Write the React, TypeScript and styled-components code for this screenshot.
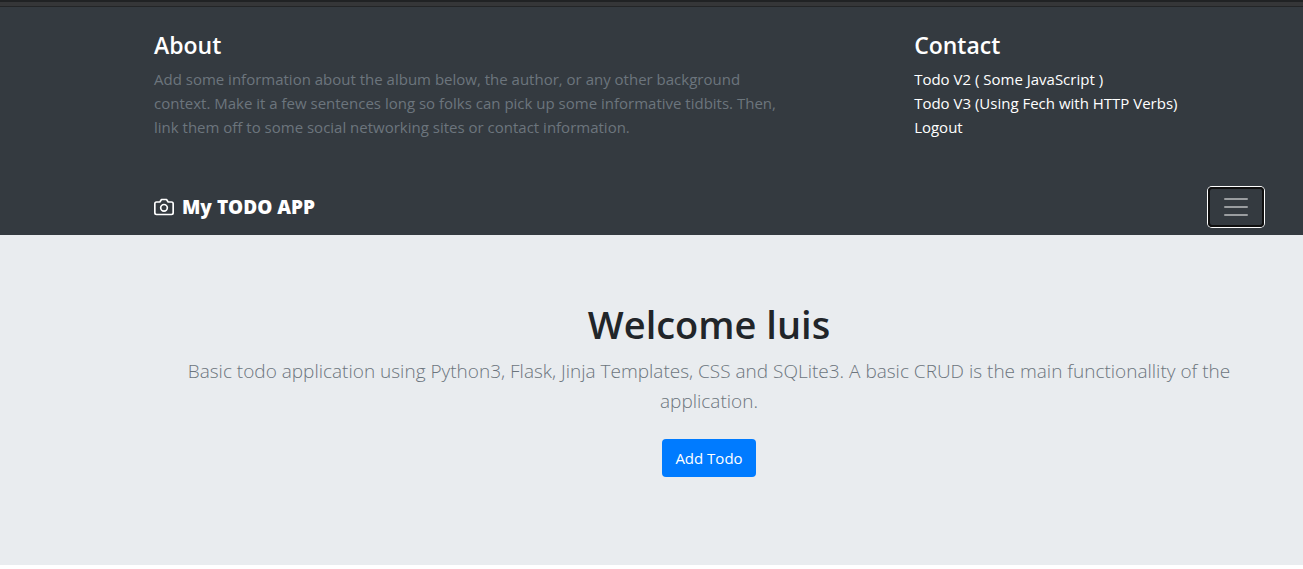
import React from "react";
import styled, { createGlobalStyle } from "styled-components";

const GlobalStyle = createGlobalStyle`
  *, *::before, *::after { box-sizing: border-box; }
  body {
    margin: 0;
    background: #fff;
    color: #212529;
    font-family: "Segoe UI", "Open Sans", "Noto Sans", sans-serif;
    font-size: 15px;
    line-height: 24px;
  }
`;

const TopEdge = styled.div`
  height: 7px;
  background: #353638;
  border-top: 2px solid #202224;
  border-bottom: 1px solid #232527;
`;

const Header = styled.header`
  background: #343a40;
  color: #fff;
`;

const Container = styled.div`
  padding: 0 39px 0 154px;
`;

const InfoRow = styled(Container)`
  display: grid;
  grid-template-columns: 20fr 11fr;
  column-gap: 124px;
  padding-top: 24px;
  padding-bottom: 40px;
`;

const InfoTitle = styled.h4`
  margin: 0 0 8px;
  font-size: 23px;
  font-weight: 600;
  line-height: 28px;
`;

const Muted = styled.p`
  margin: 0;
  color: #6c757d;
`;

const LinkList = styled.ul`
  margin: 0;
  padding: 0;
  list-style: none;
`;

const NavLink = styled.a`
  color: #fff;
  text-decoration: none;
`;

const NavBar = styled(Container)`
  display: flex;
  align-items: center;
  justify-content: space-between;
  padding-top: 8px;
  padding-bottom: 8px;
`;

const Brand = styled.a`
  display: flex;
  align-items: center;
  gap: 8px;
  color: #fff;
  font-size: 19px;
  font-weight: 700;
  line-height: 30px;
  text-decoration: none;
`;

const Toggler = styled.button`
  display: flex;
  align-items: center;
  justify-content: center;
  width: 56px;
  height: 40px;
  padding: 0;
  background: transparent;
  border: 2px solid #101010;
  border-radius: 4px;
  box-shadow: 0 0 0 1px #fff;
`;

const Hero = styled.section`
  background: #e9ecef;
  padding: 65px 0 88px;
`;

const HeroContent = styled(Container)`
  text-align: center;
`;

const HeroTitle = styled.h1`
  margin: 0 0 8px;
  font-size: 38px;
  font-weight: 600;
  line-height: 48px;
`;

const Lead = styled.p`
  margin: 0 0 23px;
  color: #6c757d;
  font-size: 19px;
  font-weight: 300;
  line-height: 30px;
`;

const PrimaryButton = styled.button`
  height: 38px;
  padding: 0 13px;
  border: 0;
  border-radius: 4px;
  background: #007bff;
  color: #fff;
  font: inherit;
  vertical-align: top;
`;

const links = [
  "Todo V2 ( Some JavaScript )",
  "Todo V3 (Using Fech with HTTP Verbs)",
  "Logout",
];

const CameraIcon = () => (
  <svg width="20" height="20" viewBox="0 0 24 24" fill="none" stroke="currentColor" strokeWidth="2" strokeLinecap="round" strokeLinejoin="round" aria-hidden="true">
    <path d="M23 19a2 2 0 0 1-2 2H3a2 2 0 0 1-2-2V8a2 2 0 0 1 2-2h4l2-3h6l2 3h4a2 2 0 0 1 2 2z" />
    <circle cx="12" cy="13" r="4" />
  </svg>
);

const MenuIcon = () => (
  <svg width="30" height="30" viewBox="0 0 30 30" stroke="rgba(255,255,255,0.5)" strokeWidth="2" strokeLinecap="round" strokeMiterlimit="10" aria-hidden="true">
    <path d="M4 7h22M4 15h22M4 23h22" />
  </svg>
);

export default function App() {
  return (
    <>
      <GlobalStyle />
      <TopEdge />
      <Header>
        <InfoRow>
          <div>
            <InfoTitle>About</InfoTitle>
            <Muted>
              Add some information about the album below, the author, or any other background
              context. Make it a few sentences long so folks can pick up some informative tidbits.
              Then, link them off to some social networking sites or contact information.
            </Muted>
          </div>
          <div>
            <InfoTitle>Contact</InfoTitle>
            <LinkList>
              {links.map((label) => (
                <li key={label}>
                  <NavLink href="#">{label}</NavLink>
                </li>
              ))}
            </LinkList>
          </div>
        </InfoRow>
        <NavBar>
          <Brand href="#">
            <CameraIcon />
            <strong>My TODO APP</strong>
          </Brand>
          <Toggler type="button" aria-label="Toggle navigation">
            <MenuIcon />
          </Toggler>
        </NavBar>
      </Header>
      <main>
        <Hero>
          <HeroContent>
            <HeroTitle>Welcome luis</HeroTitle>
            <Lead>
              Basic todo application using Python3, Flask, Jinja Templates, CSS and SQLite3. A
              basic CRUD is the main functionallity of the application.
            </Lead>
            <PrimaryButton type="button">Add Todo</PrimaryButton>
          </HeroContent>
        </Hero>
      </main>
    </>
  );
}
